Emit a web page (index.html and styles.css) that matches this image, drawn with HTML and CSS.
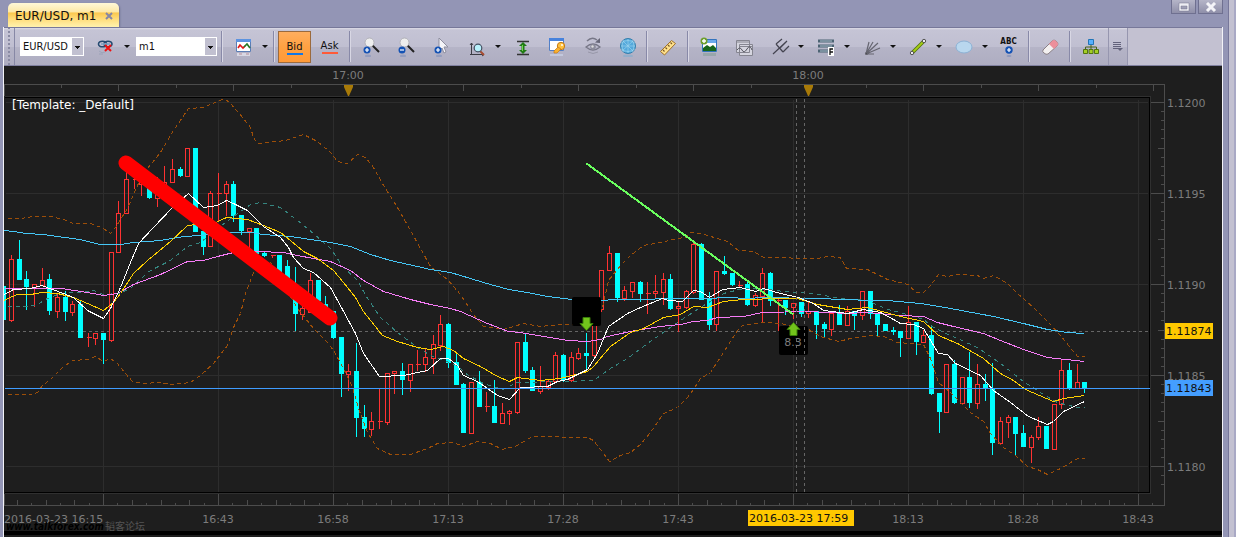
FILE: index.html
```html
<!DOCTYPE html>
<html lang="en">
<head>
<meta charset="utf-8">
<title>EUR/USD, m1</title>
<link rel="stylesheet" href="styles.css">
</head>
<body>
<div class="window">
  <header class="tabbar">
    <div class="tab"><span>EUR/USD, m1</span>
      <button class="tab-close" aria-label="Close tab"><svg width="8" height="8" viewBox="0 0 8 8"><path d="M1 1l6 6M7 1L1 7" stroke="#8587a6" stroke-width="2"/></svg></button>
    </div>
    <div class="win-buttons">
      <button class="win-button" aria-label="Restore"><svg width="12" height="10" viewBox="0 0 12 10"><path d="M1 1h10v8H1zM3 4h6v3H3z" fill="#eeeef4" fill-rule="evenodd" stroke="#77778f" stroke-width=".5"/></svg></button>
      <button class="win-button" aria-label="Close"><svg width="12" height="10" viewBox="0 0 12 10"><path d="M2 1l8 8M10 1L2 9" stroke="#f4f4f8" stroke-width="3"/></svg></button>
    </div>
  </header>

  <div class="frame">
    <nav class="toolbar" aria-label="Chart tools">
      <span class="grip"></span>
      <span class="combo combo-symbol"><select aria-label="Symbol"><option>EUR/USD</option></select></span>
      <button class="tool split" aria-label="Unlink"><span class="icon"><svg viewBox="0 0 20 20"><g fill="none" stroke="#254a70" stroke-width="1.6"><ellipse cx="6.500" cy="7" rx="4" ry="2.800"/><ellipse cx="12" cy="7" rx="4" ry="2.800"/><path d="M5 7h9" stroke="#7fa3c5"/></g><path d="M9 8l6 6M15 8l-6 6" stroke="#f01010" stroke-width="2"/><path d="M3 14q3 3 6 1M3 17h4" stroke="#8e9bb0" opacity=".6" fill="none"/></svg></span><i class="caret"></i></button>
      <span class="combo combo-period"><select aria-label="Period"><option>m1</option></select></span>
      <span class="sep"></span>
      <button class="tool split" aria-label="Chart template"><span class="icon"><svg viewBox="0 0 20 20"><path d="M2.500 2.500h14v12h-14z" fill="#fff" stroke="#5b7db5"/><path d="M2 2h15v3H2z" fill="#5c93e0"/><path d="M4 11l2-3 3 3 2-2" fill="none" stroke="#e01818" stroke-width="1.700"/><path d="M10 10l3-3 3 4" fill="none" stroke="#247a25" stroke-width="1.700"/><path d="M3 16h13v3H3z" fill="#d8d8e4"/><path d="M5 17h3M12 17h3" stroke="#b58c98"/></svg></span><i class="caret"></i></button>
      <span class="sep"></span>
      <button class="price bid">Bid</button>
      <button class="price ask">Ask</button>
      <span class="sep"></span>
      <button class="tool" aria-label="Zoom in"><span class="icon"><svg viewBox="0 0 20 20"><path d="M11 8l7 7" stroke="#222" stroke-width="2"/><circle cx="8.500" cy="5.500" r="4.500" fill="#eee" stroke="#b1b1b8"/><circle cx="6" cy="13" r="3.500" fill="#1452b4"/><path d="M4 13h4M6 11v4" stroke="#fff" stroke-width="1.200"/><ellipse cx="7" cy="19" rx="3" ry="1.500" fill="#7589b8" opacity=".5"/></svg></span></button>
      <button class="tool" aria-label="Zoom out"><span class="icon"><svg viewBox="0 0 20 20"><path d="M11 8l7 7" stroke="#222" stroke-width="2"/><circle cx="8.500" cy="5.500" r="4.500" fill="#eee" stroke="#b1b1b8"/><circle cx="6" cy="13" r="3.500" fill="#1452b4"/><path d="M4 13h4" stroke="#fff" stroke-width="1.200"/><ellipse cx="7" cy="19" rx="3" ry="1.500" fill="#7589b8" opacity=".5"/></svg></span></button>
      <button class="tool" aria-label="Pointer"><span class="icon"><svg viewBox="0 0 20 20"><path d="M8 1v13l3-3 2 5 2-1-2-5h4z" fill="#f4f4f8" stroke="#8f8f9f"/><circle cx="7" cy="13" r="3.500" fill="#1452b4"/><path d="M5 13h4M7 11v4" stroke="#fff" stroke-width="1.200"/><ellipse cx="8" cy="19" rx="3" ry="1.500" fill="#7589b8" opacity=".5"/></svg></span></button>
      <button class="tool split" aria-label="Zoom area"><span class="icon"><svg viewBox="0 0 20 20"><path d="M4.500 6v12M3 8l1.500-2L6 8M3 17.500h14M15 16l2 1.500-2 1.500" fill="none" stroke="#3c3c45"/><path d="M13 14l4 4" stroke="#a84c31" stroke-width="2"/><circle cx="11" cy="11" r="3.800" fill="#b8f1fc" stroke="#444f62" stroke-width="1.200"/></svg></span><i class="caret"></i></button>
      <button class="tool" aria-label="Fit vertically"><span class="icon"><svg viewBox="0 0 20 20"><path d="M5 4.500h12M5 17.500h12" stroke="#333" stroke-width="1.300"/><path d="M11 5l4 4h-2.500v4H15l-4 4-4-4h2.500V9H7z" fill="#217b15"/><path d="M10.500 8v6" stroke="#70d84c"/></svg></span></button>
      <button class="tool" aria-label="Properties"><span class="icon"><svg viewBox="0 0 20 20"><path d="M2.500 1.500h14v12h-14z" fill="#fff" stroke="#537fc5"/><path d="M2 1h15v3H2z" fill="#4782dc"/><circle cx="14" cy="9" r="3.700" fill="#ffc13f" stroke="#c57a18"/><path d="M11 10l-4 4v2h3l4-4z" fill="#f9b12e" stroke="#c57a18" stroke-width=".7"/><circle cx="15" cy="8" r="1" fill="#fff"/><path d="M3 17h13v2H3z" fill="#c9d2e8" opacity=".7"/></svg></span></button>
      <button class="tool" aria-label="Show or hide"><span class="icon"><svg viewBox="0 0 20 20"><path d="M4 10q7-6 14 0-7 6-14 0z" fill="none" stroke="#777787" stroke-width="1.300"/><circle cx="11" cy="10" r="2.800" fill="#8d8d9c"/><circle cx="10.500" cy="9.500" r="1.200" fill="#ddd"/><path d="M5 4q5-5 10-1" fill="none" stroke="#777787" stroke-width="1.500"/><path d="M13 5.500l5 .5V1z" fill="#666677"/><path d="M6 15q5 3 10 0" fill="none" stroke="#9898a9"/></svg></span></button>
      <button class="tool" aria-label="Globe"><span class="icon"><svg viewBox="0 0 20 20"><circle cx="11" cy="9" r="7.500" fill="#54a9dc" stroke="#347eac"/><path d="M4 6q7-5 14 0M4 12q7 5 14 0M4 9h14M11 2v14M7 3q-4 6 0 12M15 3q4 6 0 12M5 14L16 4M6 4l10 10" fill="none" stroke="#a5d8f0" stroke-width=".6"/><ellipse cx="11" cy="19" rx="5" ry="1.500" fill="#76acd0" opacity=".5"/></svg></span></button>
      <span class="sep"></span>
      <button class="tool" aria-label="Ruler"><span class="icon"><svg viewBox="0 0 20 20"><path d="M2.500 14.500l11-11 4 3-11 11.500z" fill="#ffe18b" stroke="#a0722c"/><path d="M5 13l1.500 1.500M7.500 10.500L9 12M10 8l1.500 1.500M12.500 5.500L14 7" stroke="#7b5a28" stroke-width="1.200"/></svg></span></button>
      <span class="sep"></span>
      <button class="tool" aria-label="Add image"><span class="icon"><svg viewBox="0 0 20 20"><path d="M3.500 2.500h14v12h-14z" fill="#fff" stroke="#3373bd"/><path d="M4 3h13v3H4z" fill="#6baaec"/><path d="M4 11l4-3 3 2 3-2 3 3v3H4z" fill="#17661b"/><circle cx="5" cy="4" r="3.500" fill="#6d9f2d"/><path d="M3 4h4M5 2v4" stroke="#fff" stroke-width="1.400"/><path d="M4 16h13v3H4z" fill="#7d9c91" opacity=".5"/></svg></span></button>
      <button class="tool" aria-label="Windows"><span class="icon"><svg viewBox="0 0 20 20" fill="none" stroke="#858590"><path d="M2.500 3.500h13v12h-13zM5.500 7.500h13v11h-13z" fill="#d5d5df"/><path d="M3 5h12M6 9.500h12"/><path d="M3 13q3-4 5 0t5-1 5 1" stroke="#55555f"/></svg></span></button>
      <button class="tool split" aria-label="Pitchfork"><span class="icon"><svg viewBox="0 0 20 20" fill="none" stroke="#444450" stroke-width="1.200"><path d="M3 17L17 4M6 7l7 8M6 7l6-5M10 11l7-7M13 15l6-6"/></svg></span><i class="caret"></i></button>
      <button class="tool split" aria-label="Fibonacci"><span class="icon"><svg viewBox="0 0 20 20"><path d="M2 4h16M2 9h16M2 14h10" stroke="#4d6474" stroke-width="3"/><path d="M4 4h12M4 9h12M4 14h8" stroke="#a9bdca"/><path d="M12 10h6v9h-6z" fill="#fff"/><path d="M14 18v-6h3M14 15h3" stroke="#111" stroke-width="1.300" fill="none"/></svg></span><i class="caret"></i></button>
      <button class="tool split" aria-label="Fan"><span class="icon"><svg viewBox="0 0 20 20" fill="none" stroke="#666671" stroke-width="1.200"><path d="M4 17L7 5M4 17l7-12M4 17L16 6M4 17l14-6M4 17h8"/><circle cx="4.500" cy="16.500" r="1" fill="#333"/></svg></span><i class="caret"></i></button>
      <button class="tool split" aria-label="Line"><span class="icon"><svg viewBox="0 0 20 20"><path d="M4 16L16 4" stroke="#52720d" stroke-width="3.500"/><path d="M4 16L16 4" stroke="#a6ce16" stroke-width="1.800"/><circle cx="4" cy="16" r="1.700" fill="#eee" stroke="#555"/><circle cx="16" cy="4" r="1.700" fill="#eee" stroke="#555"/></svg></span><i class="caret"></i></button>
      <button class="tool split" aria-label="Ellipse"><span class="icon"><svg viewBox="0 0 20 20"><ellipse cx="10" cy="10" rx="8" ry="6" fill="#b9d7ee" stroke="#8db2d5"/></svg></span><i class="caret"></i></button>
      <button class="tool abc" aria-label="Add text"><span>ABC</span><svg width="8" height="11" viewBox="0 0 8 11"><circle cx="4" cy="4" r="3.700" fill="#1452b4"/><path d="M2 4h4M4 2v4" stroke="#fff" stroke-width="1.200"/><ellipse cx="4" cy="10" rx="2.500" ry="1" fill="#7589b8" opacity=".6"/></svg></button>
      <span class="sep"></span>
      <button class="tool" aria-label="Eraser"><span class="icon"><svg viewBox="0 0 20 20"><path d="M3 13l9-9q2-2 4 0l1 1q2 2 0 4l-9 8q-2 1-4-1-2-1-1-3z" fill="#f3f0f0" stroke="#8a8086"/><path d="M9 7l3-3q2-2 4 0l1 1q2 2 0 4l-3 3z" fill="#ec8f9b"/></svg></span></button>
      <span class="sep"></span>
      <button class="tool" aria-label="Hierarchy"><span class="icon"><svg viewBox="0 0 20 20"><path d="M10 7v6M4.500 13v-3h11v3" fill="none" stroke="#48621c"/><path d="M7.500 2.500h5v5h-5z" fill="#55b0ff" stroke="#2175b7"/><path d="M2.500 12.500h4v4h-4zM8 12.500h4v4H8zM13.500 12.500h4v4h-4z" fill="#a4cf24" stroke="#53740f"/></svg></span></button>
      <button class="overflow" aria-label="More tools"><svg width="12" height="12" viewBox="0 0 12 12"><path d="M1 1.500h8M1 3.500h8M1 5.500h8M1 7.500h5" stroke="#62627b"/><path d="M5 7h6L8 10z" fill="#62627b"/></svg></button>
    </nav>
    <main class="chart">
      <svg id="chart" viewBox="4 66 1218 471" role="img" aria-label="EUR/USD one minute chart"></svg>
    </main>
  </div>
</div>
<script src="chart.js"></script>
</body>
</html>
```
FILE: styles.css
```css
* { box-sizing: border-box; }
body {
  margin: 0;
  background: #9395b5;
  font: 12px/14px "DejaVu Sans", Verdana, sans-serif;
  color: #111;
}
button { font: inherit; color: inherit; border: 0; padding: 0; background: none; }
svg { display: block; }

.window {
  min-height: 100vh;
  display: flex;
  flex-direction: column;
  padding-right: 8px;
  background: linear-gradient(90deg, #77779a 1px, #c3c1d1 1px, #c3c1d1 6px, #a9a9c5 6px) right / 8px 100% no-repeat, #9395b5;
}
.tabbar {
  height: 27px;
  display: flex;
  justify-content: space-between;
  align-items: flex-start;
  padding: 0 5px 0 8px;
}
.tab {
  align-self: flex-end;
  height: 24px;
  display: flex;
  align-items: center;
  gap: 9px;
  padding: 1px 6px 0 7px;
  border-radius: 5px 5px 0 0;
  background: linear-gradient(#fff8d8, #fde9a8 36%, #fbc950 42%, #ffe083 72%, #fff2ae);
  box-shadow: 1px 1px 2px #6d6e90;
}
.win-buttons { display: flex; gap: 2px; }
.win-button {
  width: 25px;
  height: 14px;
  display: flex;
  justify-content: center;
  align-items: center;
  border: 1px solid #6f7090;
  border-top: 0;
  background: linear-gradient(#b5b5c8, #8f8fa9);
}

.frame {
  flex: 1;
  display: flex;
  flex-direction: column;
  margin: 0 5px 0 3px;
  border: solid #f3f3f8;
  border-width: 0 1px;
}
.toolbar {
  height: 39px;
  display: flex;
  align-items: stretch;
  border-top: 1px solid #777899;
  border-bottom: 1px solid #80809f;
  background: linear-gradient(#dddce7, #c5c4d5 2px, #c0bfd1 50%, #b5b4c7 51%, #aeadc1) left / 1124px 100% no-repeat, #c3c1d1;
}
.grip {
  width: 11px;
  border-right: 1px solid #8788a5;
  background: radial-gradient(circle, #8a8ba4 1px, transparent 1px) 3px 6px / 4px 4px repeat-y;
}
.combo {
  position: relative;
  align-self: center;
  height: 19px;
  background: #fff;
}
.combo::after {
  content: "";
  position: absolute;
  right: 1px;
  top: 1px;
  width: 11px;
  height: 17px;
  pointer-events: none;
  background: linear-gradient(#111, #111) 3px 8px / 5px 1px no-repeat, linear-gradient(#111, #111) 4px 9px / 3px 1px no-repeat, linear-gradient(#111, #111) 5px 10px / 1px 1px no-repeat, #c1c0d0;
}
.combo-symbol { width: 64px; margin: 0 3px 0 5px; }
.combo-period { width: 81px; margin: 0 2px 0 3px; }
.combo select {
  width: 100%;
  height: 100%;
  appearance: none;
  border: 0;
  padding: 0 0 0 3px;
  background: none;
  color: #111;
  font: 11px/17px "DejaVu Sans Condensed", Tahoma, sans-serif;
}
.sep {
  width: 2px;
  margin: 3px 2px;
  background: linear-gradient(90deg, #8889a8 1px, #d8d7e4 1px);
}
.tool { width: 35px; display: flex; align-items: center; justify-content: center; }
.tool.split { width: 46px; justify-content: flex-start; }
.tool.split .icon { margin: 0 8px 0 9px; }
.icon svg { width: 20px; height: 20px; }
.caret {
  border: solid transparent;
  border-width: 3px 3px 0;
  border-top-color: #111;
}
.price {
  display: flex;
  flex-direction: column;
  justify-content: center;
  align-items: center;
  font: 10px/13px "DejaVu Sans", Verdana, sans-serif;
}
.price::after { content: ""; width: 16px; height: 2px; }
.bid {
  width: 33px;
  margin: 3px 1px 2px;
  border: 1px solid #9b6a3d;
  background: linear-gradient(#ffae5f, #ffa142 50%, #ff9a38);
}
.bid::after { background: #1077e8; }
.ask { width: 35px; }
.ask::after { background: #ff5a38; }
.tool.abc {
  flex-direction: column;
  font: bold 8px/9px "DejaVu Sans Condensed", sans-serif;
}
.overflow {
  width: 20px;
  display: flex;
  justify-content: center;
  align-items: center;
  border: solid #9696af;
  border-width: 0 1px;
}

.chart { flex: 1; background: #1e1e1e; }
#chart { width: 100%; height: auto; font: 11px "DejaVu Sans", Verdana, sans-serif; }
.crisp { shape-rendering: crispEdges; fill: none; }
.grid { stroke: #2d2d2d; }
.ruler { stroke: #4c4c4c; }
.guide { stroke: #666; stroke-dasharray: 3 3; }
.border { stroke: #000; }
.border-outer { stroke: #303030; }
.slow { stroke: #45c6f5; }
.medium { stroke: #f77cf7; }
.fast { stroke: #fff; }
.mid { stroke: #ffd000; }
.basis { stroke: #35857f; stroke-dasharray: 4 4; }
.band { stroke: #9c4e08; stroke-dasharray: 4 3; }
.up { stroke: #ff3232; }
.down { fill: #0ff; }
.quote { stroke: #3f9cff; }
.trend { stroke: #6aff5e; stroke-width: 2; }
.thick { stroke: #f00; stroke-width: 15; stroke-linecap: round; }
.label { fill: #7c7c7c; }
.title { fill: #fff; font-size: 12px; }
.dark { fill: #111; }
.center { text-anchor: middle; }
.tag-yellow { fill: #ffc800; }
.tag-blue { fill: #449eff; }
.arrow { fill: #72c41c; stroke: #397d09; }
.pin { fill: #a87a08; }
.mark { fill: #000; font: italic bold 10px "DejaVu Sans Condensed", sans-serif; }
.mark-cjk { fill: #555; font: 10px "Noto Sans CJK SC", sans-serif; }
```
FILE: chart.js
```javascript
const svg = document.getElementById('chart');
const STEP = 115 / 15;

function add(name, attrs, text) {
  const el = document.createElementNS('http://www.w3.org/2000/svg', name);
  for (const key in attrs) el.setAttribute(key, attrs[key]);
  if (text) el.textContent = text;
  svg.appendChild(el);
}
function path(cls, d) {
  add('path', { class: 'crisp ' + cls, d, transform: 'translate(.5 .5)' });
}
function text(cls, x, y, value) {
  add('text', { class: cls, x, y }, value);
}

// Grid
let d = '';
for (let i = 0; i < 10; i++) d += `M${103 + 115 * i} 99V491`;
for (let i = 0; i < 5; i++) d += `M5 ${102 + 91 * i}H1147`;
path('grid', d);

// Rulers
path('border-outer', 'M4 96H1150V493H4');
path('border', 'M4 97H1149V492H4');
d = 'M4 505V493M4 95V84H1164V505H4';
for (let i = 0; i < 80; i++) {
  const x = Math.round(16.75 + 14.375 * i);
  if (x < 1160) d += `M${x} 505V${(i - 6) % 8 === 0 ? 493 : i % 2 ? 502 : 499}`;
}
for (let i = 1; i <= 20; i++) d += `M${Math.round(3 + 57.5 * i)} 84V${i % 2 ? 87 : 90}`;
for (let i = 0; i < 44; i++) {
  const y = Math.round(102 + 9.1 * i);
  if (y < 487) d += `M1164 ${y}H${i % 10 === 0 ? 1150 : i % 5 === 0 ? 1157 : 1160}`;
}
path('ruler', d);
path('guide', 'M4 331H1149');

// Candles: body top, body bottom, high, low; r = rising, f = falling
const candles = `f286,320,286,320 r259,320,254,321 f259,280,240,280 f279,287,271,310 r284,287,283,306
r280,285,267,285 f279,311,274,315 r297,311,292,317 f297,312,291,321 r304,312,300,315 f304,338,301,338
r337,337,332,346 r333,338,332,344 f333,340,333,364 r252,340,252,341 r213,252,200,252 r179,213,156,213
r179,179,171,188 r178,184,172,195 f185,198,182,199 r187,198,176,206 r182,192,165,192 r169,182,158,182
f169,176,167,177 r148,176,148,176 f148,232,148,232 f231,247,231,255 r193,246,190,246 r193,193,172,220
r184,193,180,215 f184,216,181,222 f215,231,215,235 r228,231,227,248 f228,254,228,254 f253,256,251,257
r255,255,255,257 f255,272,255,272 f266,279,260,284 f288,314,267,331 r308,314,303,319 r280,312,272,312
f280,301,280,301 f304,315,296,315 f311,338,311,339 f337,374,337,397 r371,374,363,390 f371,418,343,437
f417,429,405,437 r421,429,411,435 r421,421,387,428 r373,422,372,424 r371,373,371,393 f371,380,363,395
r364,380,363,391 r364,364,349,370 r357,364,347,371 r344,358,334,373 r324,345,314,350 f324,363,323,368
f362,385,354,385 f384,433,383,433 r382,433,382,433 f382,407,371,407 r406,406,391,411 f406,423,380,423
r413,423,402,423 r411,413,409,424 r342,412,342,413 f342,371,334,373 f370,391,367,391 r386,391,365,393
r381,387,378,389 r355,381,351,381 f355,380,354,382 r357,380,351,381 r353,358,347,359 f353,356,333,370
r314,355,314,357 r270,309,269,311 r253,270,245,270 f253,298,253,302 r290,298,285,300 r282,291,281,297
f282,294,281,302 r293,293,281,313 r291,293,274,297 r279,292,272,304 f279,309,274,310 r306,308,301,331
r291,307,289,308 r244,292,241,293 f244,300,243,300 f299,325,292,330 r271,324,271,330 f271,274,256,275
f273,285,273,286 r285,285,280,286 f284,305,280,306 r295,305,292,306 r273,296,267,322 f273,301,272,306
r300,300,296,330 f300,308,300,315 r303,307,303,318 f302,314,302,317 r311,313,300,317 f311,325,311,339
f324,329,322,337 r313,329,313,335 f313,325,305,325 r311,325,305,325 f311,316,311,330 r291,315,291,319
f291,314,291,319 f313,325,313,337 f324,331,324,331 f330,332,327,335 f331,338,331,357 r322,338,305,338
f322,342,322,355 r335,342,329,342 f335,394,325,395 f393,412,393,433 r364,412,364,412 f364,403,360,404
r377,403,377,403 f377,403,352,408 r384,403,363,408 f384,388,374,401 f388,443,363,455 r421,443,416,443
r417,422,414,437 f417,434,417,455 f433,447,425,447 r437,447,434,462 r426,437,416,439 f426,449,426,449
r404,449,404,449 r370,404,358,408 f370,388,363,390 r382,388,363,388 f382,388,382,393`.split(/\s+/);
let rising = '';
let falling = '';
candles.forEach((row, i) => {
  const x = Math.round(103 + STEP * (i - 13));
  const [top, bottom, high, low] = row.slice(1).split(',').map(Number);
  if (row[0] === 'r') {
    rising += `M${x} ${high}V${top}M${x} ${bottom}V${low}`;
    rising += top === bottom ? `M${x - 2} ${top}H${x + 3}` : `M${x - 2} ${top}h4V${bottom}h-4z`;
  } else {
    falling += `M${x - 2} ${top}h5V${bottom}h-5zM${x} ${high}h1V${low}h-1z`;
  }
});
path('up', rising);
add('path', { class: 'down', d: falling, 'shape-rendering': 'crispEdges' });

// Indicators
const curves = [
  ['band', '7,218 20,218 33,216 50,216 63,219 73,223 90,223 103,228 110,233 115,227 127,208 137,185 147,168 160,152 173,130 188,108 203,107 210,104 224,98 230,103 243,118 250,127 253,137 257,143 285,140 303,134 317,141 330,152 337,161 347,163 357,154 365,157 373,167 383,185 397,207 410,230 430,266 447,279 460,294 473,314 483,326 503,329 523,323 540,326 560,324 593,324 602,307 608,280 620,265 630,255 643,245 660,242 677,238 685,237 690,232 700,233 717,238 727,241 738,250 753,251 763,257 817,258 827,256 840,257 846,268 867,269 887,279 908,284 915,292 923,292 930,285 938,274 947,276 957,274 977,275 983,278 993,275 1007,283 1017,293 1033,307 1047,321 1060,335 1077,356 1084,356'],
  ['band', '7,394 30,394 37,392 42,385 50,379 62,367 72,360 87,359 95,356 103,361 110,358 117,363 125,373 132,381 143,383 158,382 172,384 190,382 200,375 213,363 227,345 233,327 240,313 245,293 253,272 270,262 297,308 313,328 327,342 333,350 337,357 345,372 352,387 358,408 367,432 377,448 390,454 410,454 427,448 437,443 453,442 463,446 477,441 490,443 502,449 517,445 532,436 587,437 593,440 603,453 609,461 620,455 630,452 640,444 650,432 663,413 677,407 687,397 693,389 700,378 710,372 723,352 737,330 742,325 763,322 780,323 808,329 820,336 838,341 850,338 870,335 883,336 897,342 923,344 930,358 938,382 950,392 958,400 970,412 983,421 990,433 1003,447 1015,455 1027,466 1037,469 1047,474 1060,468 1077,458 1084,458'],
  ['basis', '7,306 20,306 35,305 47,298 60,293 77,292 93,290 103,294 118,293 130,288 138,280 150,270 170,260 187,246 200,242 217,228 233,216 250,204 260,202 280,207 297,220 313,233 330,248 343,267 357,280 367,298 380,317 397,332 417,347 430,355 443,360 457,365 465,373 483,383 502,389 517,382 560,381 593,380 610,368 627,358 647,343 667,329 680,320 700,307 723,293 743,288 767,289 783,291 813,293 840,298 867,300 887,309 900,312 923,319 933,327 950,335 977,347 1000,363 1023,381 1043,394 1057,402 1077,407 1084,407'],
  ['slow', '4,230 13,231 25,233 43,234 57,236 79,239 100,244 120,244 133,242 160,240 183,236 200,235 213,233 233,232 250,232 263,234 290,236 310,239 330,242 350,246 370,254 390,260 417,266 430,269 450,272 470,278 483,282 508,289 527,292 547,296 572,299 603,300 613,299 650,299 660,298 707,298 727,297 747,298 763,297 813,298 847,299 867,300 887,300 920,303 950,308 993,316 1023,323 1047,329 1067,332 1084,333'],
  ['medium', '4,288 61,288 93,293 103,295 117,293 133,284 160,274 187,261 203,260 217,256 233,252 257,251 283,252 297,255 313,258 330,261 350,270 363,280 383,291 410,299 430,304 450,308 460,311 487,323 508,331 520,332 543,336 567,340 587,341 600,339 607,336 630,331 660,326 680,324 693,321 707,320 717,317 743,316 762,312 807,311 847,313 867,312 900,315 923,316 937,322 953,326 983,333 1000,340 1023,349 1047,357 1084,361'],
  ['mid', '4,300 7,298 17,294 30,294 42,292 57,293 73,297 87,303 103,310 113,302 120,293 133,273 147,260 170,241 187,225 197,224 213,223 226,217 247,219 263,225 280,232 290,240 303,251 317,258 333,270 343,282 355,297 363,311 382,335 397,341 417,347 430,349 443,346 453,350 463,358 480,366 497,376 509,381 517,377 540,380 560,378 587,371 593,366 610,346 630,332 643,328 663,317 680,314 693,306 707,307 723,301 743,299 780,298 797,298 817,304 847,309 867,307 900,316 923,321 938,335 957,343 983,358 1000,373 1013,380 1025,389 1053,401 1063,398 1084,395'],
  ['fast', '4,294 13,289 30,288 41,285 63,293 73,297 87,310 103,318 110,308 120,287 130,262 138,243 153,227 172,207 188,193 203,207 217,205 226,200 233,203 247,210 263,226 280,237 288,247 293,257 303,268 313,272 330,287 342,309 355,333 363,353 379,376 403,375 427,370 440,358 448,358 457,365 463,375 477,381 497,395 509,399 520,387 547,386 557,381 567,379 587,369 597,353 608,326 627,313 640,307 662,298 668,300 682,301 693,290 700,291 709,297 722,289 740,287 755,291 763,288 780,293 798,297 813,303 823,310 847,313 863,309 880,312 893,319 900,323 913,324 923,328 938,353 947,354 955,363 980,375 993,390 1010,402 1028,416 1047,424 1053,421 1063,411 1084,401']
];
curves.forEach(([cls, points]) => path(cls, 'M' + points));

path('quote', 'M4 388H1149');

// Signals and drawings
add('rect', { x: 572, y: 297, width: 29, height: 29, rx: 2 });
add('rect', { x: 779, y: 326, width: 29, height: 29, rx: 2 });
path('guide', 'M796 98V491M804 98V491');
text('label center', 793, 346, '8.3');
path('trend', 'M586 163L793 314');
add('path', { class: 'arrow', d: 'M583 317.500h7v6h3l-6.500 7-6.500-7h3z' });
add('path', { class: 'arrow', d: 'M790 335.500h7v-6h3l-6.500-7-6.500 7h3z' });
add('path', { class: 'thick', d: 'M126 163L330 318' });

// Labels
text('title', 12, 109, '[Template: _Default]');
['1.1200', '1.1195', '1.1190', '1.1185', '1.1180'].forEach((v, i) => text('label', 1167, 107 + 91 * i, v));
text('label', 4, 523, '2016-03-23 16:15');
['16:43', '16:58', '17:13', '17:28', '17:43', '', '18:13', '18:28', '18:43'].forEach((v, i) => {
  if (v) text('label center', 218 + 115 * i, 523, v);
});
[['17:00', 348], ['18:00', 808]].forEach(([v, x]) => {
  text('label center', x, 79, v);
  add('path', { class: 'pin', d: `M${x - 4} 85h9v2l-4 9h-1l-4-9z` });
});
add('rect', { class: 'tag-yellow', x: 1165, y: 323, width: 48, height: 16 });
text('dark', 1166, 335, '1.11874');
add('rect', { class: 'tag-blue', x: 1165, y: 380, width: 48, height: 16 });
text('dark', 1166, 392, '1.11843');
add('rect', { class: 'tag-yellow', x: 748, y: 510, width: 106, height: 16 });
text('dark', 749, 522, '2016-03-23 17:59');
text('mark', 6, 530, 'www.talkforex.com');
text('mark-cjk', 105, 530, '韬客论坛');
add('rect', { x: 4, y: 531, width: 1218, height: 4 });
```
